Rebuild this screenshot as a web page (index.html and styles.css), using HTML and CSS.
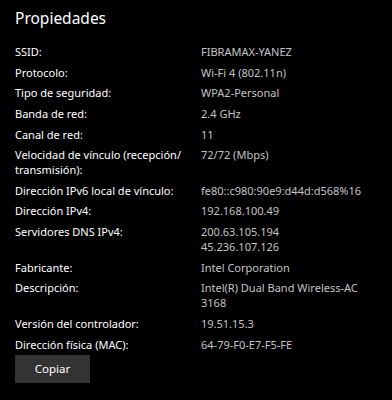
FILE: index.html
```html
<!DOCTYPE html>
<html lang="es">
<head>
<meta charset="utf-8">
<title>Propiedades</title>
<link rel="stylesheet" href="styles.css">
</head>
<body>
<main class="panel">
  <h1 class="title">Propiedades</h1>
  <dl class="props">
    <dt>SSID:</dt><dd>FIBRAMAX-YANEZ</dd>
    <dt>Protocolo:</dt><dd>Wi-Fi 4 (802.11n)</dd>
    <dt>Tipo de seguridad:</dt><dd>WPA2-Personal</dd>
    <dt>Banda de red:</dt><dd>2.4 GHz</dd>
    <dt>Canal de red:</dt><dd>11</dd>
    <dt>Velocidad de vínculo (recepción/<br>transmisión):</dt><dd>72/72 (Mbps)</dd>
    <dt>Dirección IPv6 local de vínculo:</dt><dd>fe80::c980:90e9:d44d:d568%16</dd>
    <dt>Dirección IPv4:</dt><dd>192.168.100.49</dd>
    <dt>Servidores DNS IPv4:</dt><dd>200.63.105.194<br>45.236.107.126</dd>
    <dt>Fabricante:</dt><dd>Intel Corporation</dd>
    <dt>Descripción:</dt><dd>Intel(R) Dual Band Wireless-AC<br>3168</dd>
    <dt>Versión del controlador:</dt><dd>19.51.15.3</dd>
    <dt>Dirección física (MAC):</dt><dd>64-79-F0-E7-F5-FE</dd>
  </dl>
  <button class="copy" type="button">Copiar</button>
</main>
</body>
</html>
```

FILE: styles.css
```css
html, body {
  margin: 0;
  padding: 0;
  background: #000;
}
body {
  font-family: "Noto Sans", "Open Sans", sans-serif;
  color: #fff;
}
.panel {
  padding: 5px 15px 0 15px;
}
.title {
  margin: 0;
  font-size: 15.5px;
  font-weight: 400;
  line-height: 26px;
  color: #fff;
}
.props {
  display: grid;
  grid-template-columns: 186px 1fr;
  row-gap: 5.65px;
  margin: 13px 0 0 0;
  font-size: 11px;
  line-height: 15px;
}
.props dt {
  margin: 0;
  color: #fff;
}
.props dd {
  margin: 0;
  color: #c4c4c4;
}
.copy {
  margin-top: 3px;
  width: 75px;
  height: 28px;
  border: none;
  background: #333;
  color: #fff;
  font-family: inherit;
  font-size: 11.5px;
  padding: 0;
}
```
